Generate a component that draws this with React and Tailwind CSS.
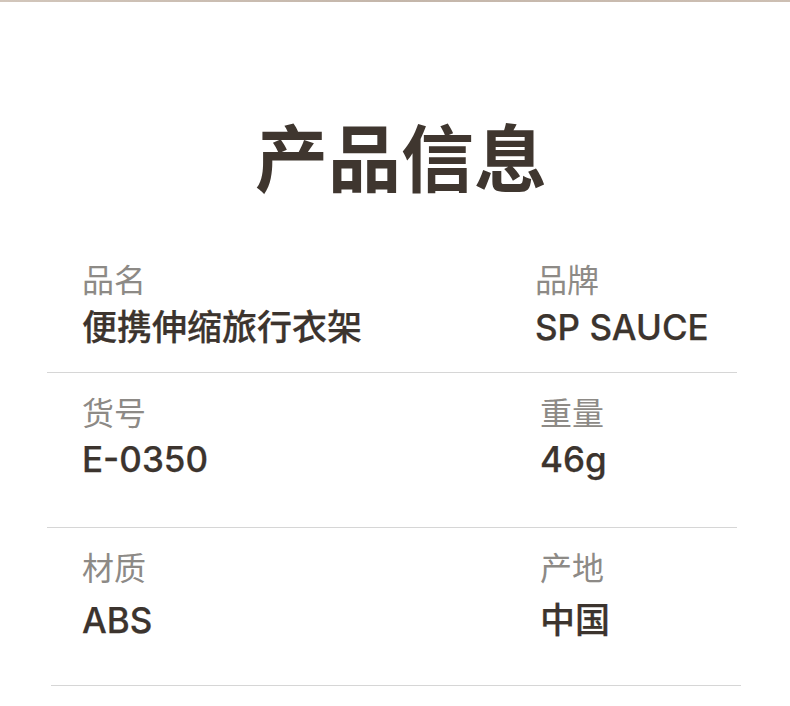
import React from 'react'

const rows = [
	{
		left: { label: '品名', value: '便携伸缩旅行衣架' },
		right: { label: '品牌', value: 'SP SAUCE' },
		rightPad: 'pl-[535px]',
		pt: 'pt-[71px]',
		gap: 'mt-[16px]',
		pb: 'pb-[27px]',
		line: 'ml-[47px] w-[690px]',
	},
	{
		left: { label: '货号', value: 'E-0350' },
		right: { label: '重量', value: '46g' },
		rightPad: 'pl-[540px]',
		pt: 'pt-[22px]',
		gap: 'mt-[15px]',
		pb: 'pb-[50px]',
		line: 'ml-[47px] w-[690px]',
	},
	{
		left: { label: '材质', value: 'ABS' },
		right: { label: '产地', value: '中国' },
		rightPad: 'pl-[540px]',
		pt: 'pt-[22px]',
		gap: 'mt-[21px]',
		pb: 'pb-[47px]',
		line: 'ml-[51px] w-[690px]',
	},
]

function Cell({ label, value, gap }) {
	return (
		<div>
			<div className="text-[32px] leading-[32px] text-[#8d8a86] whitespace-nowrap">{label}</div>
			<div
				className={`${gap} text-[35px] leading-[35px] font-medium text-[#3c342e] [-webkit-text-stroke:0.25px_#3c342e] whitespace-nowrap`}
				style={{ fontFamily: 'Inter, "Noto Sans CJK SC", sans-serif' }}
			>
				{value}
			</div>
		</div>
	)
}

export default function App() {
	return (
		<div
			className="w-[790px] h-[706px] bg-white overflow-hidden"
			style={{ fontFamily: '"Noto Sans CJK SC", "Noto Sans", sans-serif' }}
		>
			{/* 顶部细线 */}
			<div className="h-[2px] bg-gradient-to-r from-[#d2c6bb] via-[#c4b6aa] to-[#cdbfb3]" />

			<h1 className="pt-[116px] text-center text-[73px] leading-[73px] font-bold text-[#3f362f] pl-[12px]">
				产品信息
			</h1>

			{rows.map((row, i) => (
				<div key={i}>
					<div className={`relative flex ${row.pt} ${row.pb}`}>
						<div className="pl-[82px]">
							<Cell {...row.left} gap={row.gap} />
						</div>
						<div className={`absolute top-0 left-0 ${row.pt} ${row.rightPad}`}>
							<Cell {...row.right} gap={row.gap} />
						</div>
					</div>
					<div className={`h-px bg-[#d6d6d6] ${row.line}`} />
				</div>
			))}
		</div>
	)
}
